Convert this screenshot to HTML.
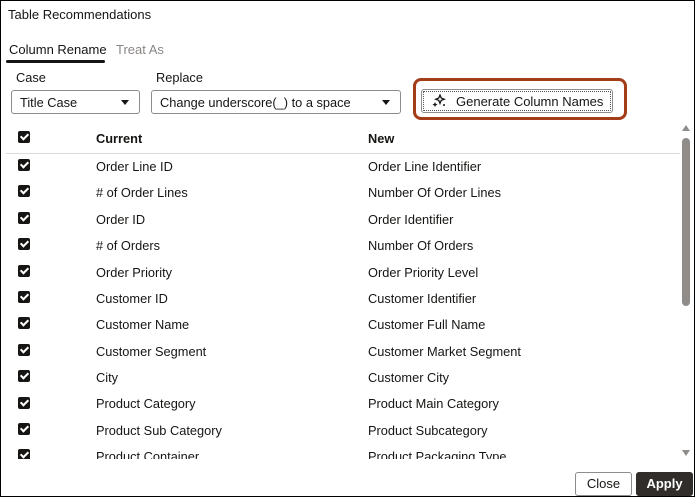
<!DOCTYPE html><html><head><style>
*{margin:0;padding:0;box-sizing:border-box}
body{width:695px;height:497px;overflow:hidden;font-family:"Liberation Sans",sans-serif;font-size:12.8px;color:#161513;background:#fff;position:relative}
.frame{position:absolute;left:0;top:0;width:695px;height:497px;border:1px solid #000;pointer-events:none;z-index:5}
.a{position:absolute;white-space:nowrap}
.cb{position:absolute;left:18px;width:12px;height:12px;background:#161513;border-radius:2px}
.cb:after{content:"";position:absolute;left:4px;top:1px;width:3px;height:6px;border:solid #fff;border-width:0 2px 2px 0;transform:rotate(45deg)}
.sel{position:absolute;height:24px;border:1px solid #8f8c89;border-radius:3px;top:90px}
.tri{position:absolute;right:10px;top:9px;border-left:4px solid transparent;border-right:4px solid transparent;border-top:5px solid #161513}
</style></head><body>
<div class="frame"></div>
<div class="a" style="left:8px;top:7px;font-size:13px">Table Recommendations</div>
<div class="a" style="left:9px;top:42px;font-size:13px">Column Rename</div>
<div class="a" style="left:116px;top:42px;font-size:13px;color:#8a8785">Treat As</div>
<div class="a" style="left:6px;top:60px;width:99px;height:3px;background:#161513;border-radius:2px"></div>
<div class="a" style="left:16px;top:70px">Case</div>
<div class="a" style="left:156px;top:70px">Replace</div>
<div class="sel" style="left:11px;width:129px"><span class="a" style="left:8px;top:4px">Title Case</span><div class="tri"></div></div>
<div class="sel" style="left:151px;width:250px"><span class="a" style="left:8px;top:4px">Change underscore(_) to a space</span><div class="tri"></div></div>
<div class="a" style="left:413px;top:78px;width:214px;height:42px;border:3px solid #a23d18;border-radius:8px"></div>
<div class="a" style="left:421px;top:89px;width:192px;height:24px;border:1px solid #8f8c89;border-radius:3px;outline:1px dotted #555;outline-offset:-3px"></div>
<svg class="a" style="left:432px;top:94px" width="14" height="14" viewBox="0 0 14 14" fill="#161513"><path d="M8 1l1.2 3 3 1.2-3 1.2L8 9.4 6.8 6.4 3.8 5.2l3-1.2z" fill="none" stroke="#161513" stroke-width="1.3"/><path d="M3 8l.8 1.8 1.8.8-1.8.8L3 13.2 2.2 11.4.4 10.6l1.8-.8z"/><circle cx="12" cy="11" r="1"/></svg>
<div class="a" style="left:456px;top:94px;font-size:13px">Generate Column Names</div>
<div class="cb" style="top:131px"></div>
<div class="a" style="left:96px;top:131px;font-weight:bold">Current</div>
<div class="a" style="left:368px;top:131px;font-weight:bold">New</div>
<div class="a" style="left:6px;top:153px;width:674px;height:1px;background:#dcdad8"></div>
<div class="a" style="left:0;top:153px;width:680px;height:306px;overflow:hidden">
<div class="cb" style="top:6px"></div><div class="a" style="left:96px;top:6px">Order Line ID</div><div class="a" style="left:368px;top:6px">Order Line Identifier</div>
<div class="cb" style="top:32px"></div><div class="a" style="left:96px;top:32px"># of Order Lines</div><div class="a" style="left:368px;top:32px">Number Of Order Lines</div>
<div class="cb" style="top:59px"></div><div class="a" style="left:96px;top:59px">Order ID</div><div class="a" style="left:368px;top:59px">Order Identifier</div>
<div class="cb" style="top:85px"></div><div class="a" style="left:96px;top:85px"># of Orders</div><div class="a" style="left:368px;top:85px">Number Of Orders</div>
<div class="cb" style="top:112px"></div><div class="a" style="left:96px;top:112px">Order Priority</div><div class="a" style="left:368px;top:112px">Order Priority Level</div>
<div class="cb" style="top:138px"></div><div class="a" style="left:96px;top:138px">Customer ID</div><div class="a" style="left:368px;top:138px">Customer Identifier</div>
<div class="cb" style="top:164px"></div><div class="a" style="left:96px;top:164px">Customer Name</div><div class="a" style="left:368px;top:164px">Customer Full Name</div>
<div class="cb" style="top:191px"></div><div class="a" style="left:96px;top:191px">Customer Segment</div><div class="a" style="left:368px;top:191px">Customer Market Segment</div>
<div class="cb" style="top:217px"></div><div class="a" style="left:96px;top:217px">City</div><div class="a" style="left:368px;top:217px">Customer City</div>
<div class="cb" style="top:244px"></div><div class="a" style="left:96px;top:243px">Product Category</div><div class="a" style="left:368px;top:243px">Product Main Category</div>
<div class="cb" style="top:270px"></div><div class="a" style="left:96px;top:270px">Product Sub Category</div><div class="a" style="left:368px;top:270px">Product Subcategory</div>
<div class="cb" style="top:296px"></div><div class="a" style="left:96px;top:296px">Product Container</div><div class="a" style="left:368px;top:296px">Product Packaging Type</div>
</div>
<div class="a" style="left:682px;top:125px;border-left:4px solid transparent;border-right:4px solid transparent;border-bottom:6px solid #8f8c89"></div>
<div class="a" style="left:682px;top:138px;width:8px;height:168px;background:#8f8c89;border-radius:4px"></div>
<div class="a" style="left:682px;top:450px;border-left:4px solid transparent;border-right:4px solid transparent;border-top:6px solid #8f8c89"></div>
<div class="a" style="left:575px;top:472px;width:57px;height:24px;border:1px solid #8f8c89;border-radius:3px;text-align:center;line-height:22px;font-size:13px">Close</div>
<div class="a" style="left:636px;top:472px;width:57px;height:24px;background:#312d2a;color:#fff;border-radius:3px;text-align:center;line-height:24px;font-weight:bold;font-size:13px">Apply</div>
</body></html>
